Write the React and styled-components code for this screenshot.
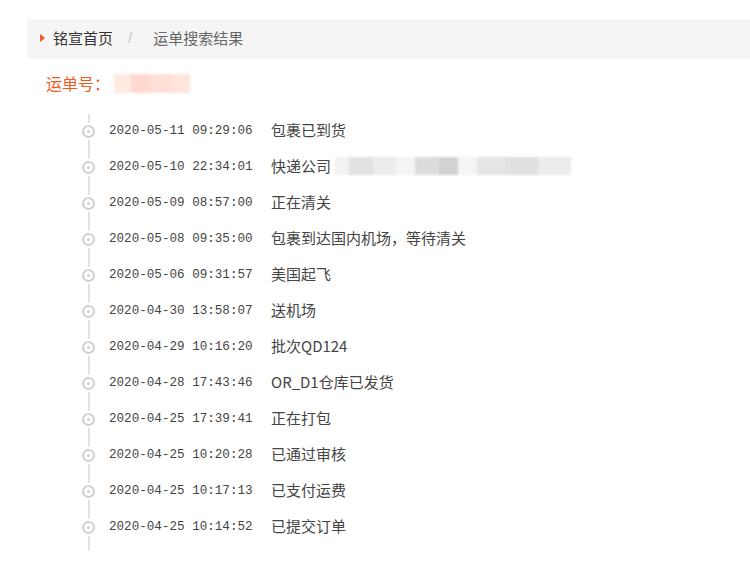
import React from "react";
import styled, { createGlobalStyle } from "styled-components";

const GlobalStyle = createGlobalStyle`
  body {
    margin: 0;
    background: #fff;
    font-family: "Noto Sans CJK SC", "Liberation Sans", sans-serif;
  }
`;

const records = [
  { time: "2020-05-11 09:29:06", text: "包裹已到货" },
  { time: "2020-05-10 22:34:01", text: "快递公司", blurred: true },
  { time: "2020-05-09 08:57:00", text: "正在清关" },
  { time: "2020-05-08 09:35:00", text: "包裹到达国内机场，等待清关" },
  { time: "2020-05-06 09:31:57", text: "美国起飞" },
  { time: "2020-04-30 13:58:07", text: "送机场" },
  { time: "2020-04-29 10:16:20", text: "批次QD124" },
  { time: "2020-04-28 17:43:46", text: "OR_D1仓库已发货" },
  { time: "2020-04-25 17:39:41", text: "正在打包" },
  { time: "2020-04-25 10:20:28", text: "已通过审核" },
  { time: "2020-04-25 10:17:13", text: "已支付运费" },
  { time: "2020-04-25 10:14:52", text: "已提交订单" },
];

export default function App() {
  return (
    <Page>
      <GlobalStyle />
      <Breadcrumb>
        <Arrow />
        <HomeLink>铭宣首页</HomeLink>
        <Sep>/</Sep>
        <Current>运单搜索结果</Current>
      </Breadcrumb>
      <OrderTitle>
        运单号：<Masked />
      </OrderTitle>
      <Timeline>
        {records.map((r) => (
          <Row key={r.time}>
            <Dot />
            <Time>{r.time}</Time>
            <Status>
              {r.text}
              {r.blurred && <Smudge />}
            </Status>
          </Row>
        ))}
      </Timeline>
    </Page>
  );
}

const Page = styled.div`
  width: 750px;
  height: 582px;
  padding-top: 19px;
  box-sizing: border-box;
  overflow: hidden;
`;

const Breadcrumb = styled.div`
  margin-left: 27px;
  height: 40px;
  background: #f5f5f5;
  display: flex;
  align-items: center;
  padding-left: 13px;
  font-size: 15px;
  line-height: 15px;
  padding-bottom: 3px;
  box-sizing: border-box;
`;

const Arrow = styled.span`
  width: 0;
  height: 0;
  border-top: 4px solid transparent;
  border-bottom: 4px solid transparent;
  border-left: 5px solid #f05a1a;
  margin-right: 8px;
`;

const HomeLink = styled.span`
  color: #333;
`;

const Sep = styled.span`
  color: #c8c8c8;
  margin: 0 21px 0 15px;
  font-family: "Liberation Sans", sans-serif;
`;

const Current = styled.span`
  color: #666;
`;

const OrderTitle = styled.div`
  margin: 9px 0 0 46px;
  height: 30px;
  display: flex;
  align-items: center;
  font-size: 16px;
  color: #f05a1e;
`;

const Masked = styled.span`
  display: inline-block;
  width: 76px;
  height: 19px;
  margin-left: 4px;
  background: linear-gradient(
    90deg,
    #ffe9e1 0 22%,
    #ffd9cd 22% 48%,
    #ffe0d6 48% 78%,
    #ffe5dc 78% 100%
  );
  filter: blur(1px);
`;

const Timeline = styled.ul`
  list-style: none;
  margin: 14px 0 0 0;
  padding: 0 0 7px 82px;
  position: relative;
  &::before {
    content: "";
    position: absolute;
    left: 88px;
    top: 2px;
    bottom: 0;
    width: 2px;
    background: #e2e2e2;
  }
`;

const Row = styled.li`
  height: 36px;
  display: flex;
  align-items: center;
`;

const Dot = styled.span`
  position: relative;
  z-index: 1;
  width: 9px;
  height: 9px;
  margin-top: 2px;
  border-radius: 50%;
  border: 2px solid #cfcfcf;
  box-shadow: 0 0 0 2px #fff;
  background: #fff;
  display: flex;
  align-items: center;
  justify-content: center;
  &::after {
    content: "";
    width: 3px;
    height: 3px;
    border-radius: 50%;
    background: #cfcfcf;
  }
`;

const Time = styled.span`
  margin-left: 14px;
  padding-top: 2px;
  font-family: "Liberation Mono", monospace;
  font-size: 12.6px;
  line-height: 18px;
  color: #444;
  width: 162px;
`;

const Status = styled.span`
  font-size: 15px;
  line-height: 18px;
  color: #444;
  display: flex;
  align-items: center;
`;

const Smudge = styled.span`
  display: inline-block;
  width: 236px;
  height: 18px;
  margin-left: 4px;
  background: linear-gradient(
    90deg,
    #f2f2f2 0 6%,
    #e2e2e2 6% 16%,
    #ececec 16% 26%,
    #f4f4f4 26% 34%,
    #dcdcdc 34% 44%,
    #d2d2d2 44% 52%,
    #f5f5f5 52% 60%,
    #e6e6e6 60% 72%,
    #e0e0e0 72% 86%,
    #ececec 86% 100%
  );
  filter: blur(1px);
`;
